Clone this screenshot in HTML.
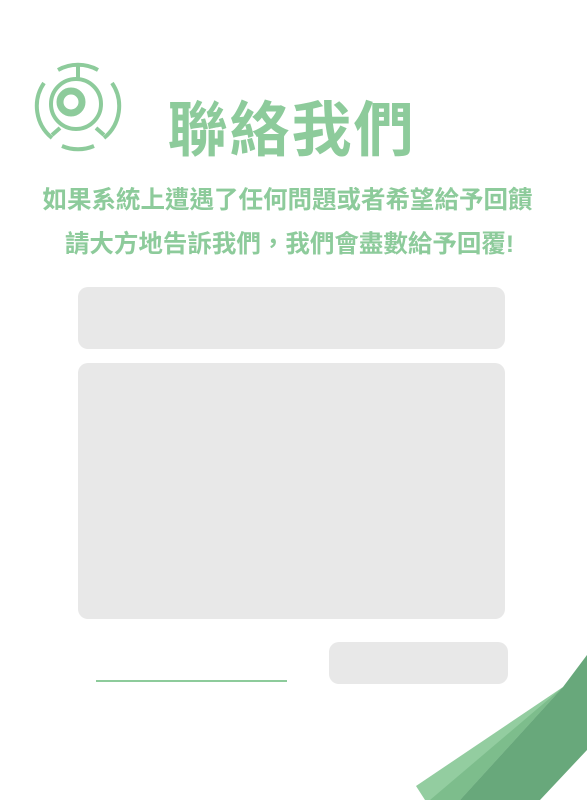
<!DOCTYPE html>
<html><head><meta charset="utf-8"><style>
body{margin:0;width:587px;height:800px;background:#fff;position:relative;overflow:hidden;font-family:"Liberation Sans","Noto Sans CJK TC",sans-serif;color:#8dcb9b}
.t{position:absolute;left:0;width:587px;text-align:center;white-space:nowrap}
.box{position:absolute;background:#e8e8e8;border-radius:10px}
</style></head><body>
<svg style="position:absolute;left:0;top:0" width="587" height="800">
<g fill="none" stroke="#8dcb9b" stroke-width="4">
<path d="M58 70 A41 41 0 0 1 98 70"/>
<path d="M44 83 A41 41 0 0 0 52 138"/>
<path d="M112 83 A41 41 0 0 1 104 138"/>
<path d="M62 146 A41 41 0 0 0 94 146"/>
<line x1="78" y1="65" x2="78" y2="80"/>
<line x1="52" y1="135" x2="60" y2="128"/>
<line x1="104" y1="135" x2="96" y2="128"/>
<circle cx="76" cy="104" r="25" stroke-width="4"/>
<circle cx="71" cy="102" r="11" stroke-width="7"/>
</g>
<polygon points="563,687 416,786 425,800 460,800" fill="#93cda0"/>
<polygon points="563,687 430,800 460,800" fill="#7dbd8c"/>
<polygon points="587,655 587,750 540,800 460,800 563,687" fill="#68a87b"/>
<line x1="96" y1="681" x2="287" y2="681" stroke="#8dcb9b" stroke-width="2"/>
</svg>
<div class="t" style="top:93px;left:-2px;font-size:60px;font-weight:bold;letter-spacing:2px;line-height:76px">聯絡我們</div>
<div class="t" style="top:185px;left:-6px;font-size:24.5px;line-height:32px;font-weight:bold">如果系統上遭遇了任何問題或者希望給予回饋</div>
<div class="t" style="top:229px;left:-4px;font-size:24.5px;line-height:32px;font-weight:bold">請大方地告訴我們，我們會盡數給予回覆!</div>
<div class="box" style="left:78px;top:287px;width:427px;height:62px"></div>
<div class="box" style="left:78px;top:363px;width:427px;height:256px"></div>
<div class="box" style="left:329px;top:642px;width:179px;height:42px"></div>
</body></html>
